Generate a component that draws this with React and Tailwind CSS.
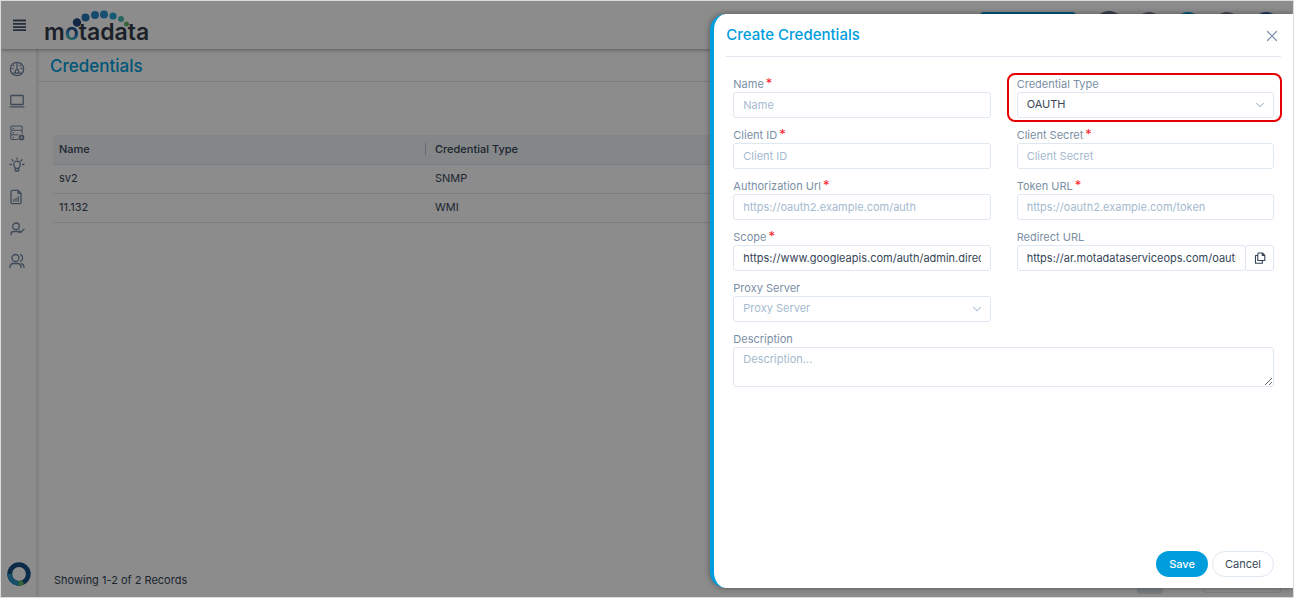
import React from 'react';
import { ChevronDown, X } from 'lucide-react';

const credentials = [
    { name: 'sv2', type: 'SNMP' },
    { name: '11.132', type: 'WMI' },
];

const controlClass =
    'block h-[26px] w-full rounded-[3px] border border-[#dfe7f0] bg-white px-[9px] pb-px text-[11px] outline-none placeholder:text-[#a5bacf]';

const Logo = () => (
    <svg width="108" height="44" viewBox="0 0 108 44" role="img" aria-label="motadata">
        <defs>
            <linearGradient id="ring" gradientUnits="userSpaceOnUse" x1="34" y1="23" x2="26" y2="38">
                <stop offset="0.35" stopColor="#20508c" />
                <stop offset="0.7" stopColor="#2a96d0" />
                <stop offset="0.95" stopColor="#4fb8a0" />
            </linearGradient>
        </defs>
        <circle cx="33" cy="19.5" r="4.2" fill="#264a80" />
        <circle cx="41.5" cy="14.5" r="4" fill="#2676b4" />
        <circle cx="51" cy="12" r="4" fill="#2785c8" />
        <circle cx="60" cy="11.5" r="4" fill="#2890cc" />
        <circle cx="69" cy="13" r="3.6" fill="#25a5cf" />
        <circle cx="77" cy="16" r="3" fill="#48b8b0" />
        <circle cx="82.5" cy="21" r="2.5" fill="#5cbb66" />
        <text x="0" y="37" fontSize="23" fontWeight="600" fill="#333d4b">
            m<tspan fill="url(#ring)">o</tspan>tadata
        </text>
    </svg>
);

const NavIcon = ({ children }) => (
    <svg width="16" height="16" viewBox="0 0 16 16" fill="none" stroke="currentColor" strokeWidth="1.3" strokeLinecap="round" strokeLinejoin="round">
        {children}
    </svg>
);

const navItems = [
    {
        label: 'Dashboard',
        icon: (
            <NavIcon>
                <circle cx="8" cy="8" r="6.7" />
                <path d="M8 2.5v6M3 7.5h1M12 7.5h1M4.5 4.3l.6.6M11.5 4.3l-.6.6M4 12.2h2.2M12 12.2H9.8" />
                <circle cx="8" cy="10.5" r="1.8" />
            </NavIcon>
        ),
    },
    {
        label: 'Devices',
        icon: (
            <NavIcon>
                <rect x="1.8" y="2.5" width="12.4" height="9" rx="0.6" />
                <path d="M1 13.8h14" />
            </NavIcon>
        ),
    },
    {
        label: 'Servers',
        icon: (
            <NavIcon>
                <path d="M3 1h9a1.2 1.2 0 0 1 1.2 1.2v1.9A1.2 1.2 0 0 1 12 5.3H3a1.2 1.2 0 0 1-1.2-1.2V2.2A1.2 1.2 0 0 1 3 1zM3 5.3h9a1.2 1.2 0 0 1 1.2 1.2V8M9 9.8H3a1.2 1.2 0 0 1-1.2-1.2V6.5A1.2 1.2 0 0 1 3 5.3M9 14.5H3a1.2 1.2 0 0 1-1.2-1.2V11A1.2 1.2 0 0 1 3 9.8M4 3.2h.6M4 7.6h.6M4 12.2h.6" strokeWidth="1.1" />
                <circle cx="12.5" cy="12.5" r="2" strokeWidth="1.8" />
            </NavIcon>
        ),
    },
    {
        label: 'Ideas',
        icon: (
            <NavIcon>
                <path d="M6.3 11.5c0-1.3-1.6-1.9-1.6-4a3.3 3.3 0 0 1 6.6 0c0 2.1-1.6 2.7-1.6 4zM6.5 14h3M8 1v1.2M1 7.5h1.5M13.5 7.5H15M3 2.8l1 1M13 2.8l-1 1M6.3 11.5v2M9.7 11.5v2" />
            </NavIcon>
        ),
    },
    {
        label: 'Reports',
        icon: (
            <NavIcon>
                <path d="M9 1.3H3.3A1.3 1.3 0 0 0 2 2.6v10.8a1.3 1.3 0 0 0 1.3 1.3h7.4a1.3 1.3 0 0 0 1.3-1.3V4.3zM9 1.3v3h3M4.8 12v-1.5M7 12V9.5M9.2 12V8" />
            </NavIcon>
        ),
    },
    {
        label: 'Requesters',
        icon: (
            <NavIcon>
                <circle cx="7" cy="5.3" r="3.3" />
                <path d="M2 13.8v-.8c0-1.5 1.2-2.5 2.7-2.5h3.5c1 0 1.8.4 2.3 1M10.5 10l1.3 1.3L15 8.3" />
            </NavIcon>
        ),
    },
    {
        label: 'Users',
        icon: (
            <NavIcon>
                <circle cx="6.5" cy="5" r="3.5" />
                <path d="M1 14.5c0-2.3 1.3-4 3.2-4h4.6c1.9 0 3.2 1.7 3.2 4M11.5 1.7a3.6 3.6 0 0 1 0 6.6M12.5 10.7c1.5.5 2.5 1.9 2.5 3.8" />
            </NavIcon>
        ),
    },
];

const Label = ({ id, required, children }) => (
    <label htmlFor={id} className="block h-4 text-[11px] leading-4 whitespace-nowrap text-[#7b8fa5]">
        {children}
        {required && <span className="ml-0.5 text-[13px] leading-none text-[#f5222d]">*</span>}
    </label>
);

const TextField = ({ id, label, required, placeholder, value }) => (
    <div>
        <Label id={id} required={required}>{label}</Label>
        <input id={id} type="text" placeholder={placeholder || label} defaultValue={value} className={`${controlClass} text-[#364658]`} />
    </div>
);

const SelectField = ({ id, label, option, muted, highlighted }) => (
    <div className="relative">
        <Label id={id}>{label}</Label>
        <div className="relative">
            <select id={id} className={`${controlClass} appearance-none ${muted ? 'text-[#a5bacf]' : 'text-[#364658]'}`}>
                <option>{option}</option>
            </select>
            <ChevronDown size={14} strokeWidth={1.8} className="pointer-events-none absolute top-1.5 right-[7px] text-[#a5bacf]" />
        </div>
        {highlighted && (
            <div className="pointer-events-none absolute -top-[3px] -right-2 -bottom-1 -left-[10px] rounded-lg border-2 border-[#e60000]" />
        )}
    </div>
);

const CredentialsPage = () => (
    <div className="flex min-h-0 flex-1 flex-col">
        <header className="z-10 flex h-12 shrink-0 items-center bg-white pr-[14px] pl-3 shadow-[0_1px_4px_rgba(0,0,0,0.35)]">
            <button type="button" aria-label="Menu" className="text-[#45546a]">
                <svg width="13" height="12" viewBox="0 0 13 12" stroke="currentColor" strokeWidth="1.8">
                    <path d="M0 1.5h13M0 4.8h13M0 8.1h13M0 11.1h13" />
                </svg>
            </button>
            <div className="ml-[18px]">
                <Logo />
            </div>
            <div className="ml-auto flex items-center gap-[13px]">
                <div className="mr-1.5 h-[26px] w-24 rounded-[4px] bg-[#009ddc]" />
                <div className="size-7 rounded-full bg-[#66758c]" />
                <div className="size-[26px] rounded-full bg-[#7b8699]" />
                <div className="size-[26px] rounded-full bg-[#009ddc]" />
                <div className="size-[26px] rounded-full bg-[#7b8699]" />
                <div className="size-[26px] rounded-full bg-[#356fb0]" />
            </div>
        </header>

        <div className="flex min-h-0 flex-1">
            <aside className="flex w-9 shrink-0 flex-col items-center border-r border-[#e6eaef] pt-3 pb-[11px] shadow-[1px_0_3px_rgba(0,0,0,0.12)]">
                <nav className="flex flex-col gap-4 pr-1 text-[#7388a3]">
                    {navItems.map(item => (
                        <a key={item.label} href="#" aria-label={item.label} className="block">
                            {item.icon}
                        </a>
                    ))}
                </nav>
                <svg width="24" height="24" viewBox="0 0 24 24" fill="none" strokeWidth="4.8" className="mt-auto">
                    <circle cx="12" cy="12" r="9.3" stroke="#164f86" />
                    <path d="M2.7 12A9.3 9.3 0 0 0 12 21.3" stroke="#2893c4" />
                    <path d="M11.5 21.3a9.3 9.3 0 0 0 4.5-1.1" stroke="#62b560" />
                </svg>
            </aside>

            <main className="flex min-w-0 flex-1 flex-col">
                <h1 className="flex h-[33px] shrink-0 items-center border-b border-[#dfe5ec] px-[13px] pt-1 text-[17px] font-medium text-[#009ddc]">
                    Credentials
                </h1>
                <div className="mt-[53px] pr-3 pl-4">
                    <table className="w-full table-fixed text-left text-[11px] text-[#364658]">
                        <thead>
                            <tr className="h-[29px] border-b border-[#dfe5ec] bg-[#f0f4f8]">
                                <th className="w-[373px] pl-1.5 font-medium">
                                    <span className="flex items-center justify-between">
                                        Name
                                        <span className="h-3 w-px bg-[#b5c5d6]" />
                                    </span>
                                </th>
                                <th className="pl-[9px] font-medium">Credential Type</th>
                            </tr>
                        </thead>
                        <tbody>
                            {credentials.map(row => (
                                <tr key={row.name} className="h-[29px] border-b border-[#dfe5ec]">
                                    <td className="pl-1.5">{row.name}</td>
                                    <td className="pl-[9px]">{row.type}</td>
                                </tr>
                            ))}
                        </tbody>
                    </table>
                </div>
                <footer className="mt-auto flex h-[34px] shrink-0 items-center pr-3 pl-[17px] text-[11px] text-[#364658]">
                    Showing 1-2 of 2 Records
                    <div className="ml-auto flex items-center gap-10">
                        <div className="h-7 w-[26px] rounded-[3px] bg-[#dde4ec]" />
                        <div className="h-[26px] w-[78px] rounded-[3px] border border-[#dfe7f0]" />
                    </div>
                </footer>
            </main>
        </div>
    </div>
);

const CreateCredentials = () => (
    <section
        role="dialog"
        aria-labelledby="drawer-title"
        className="absolute top-[13px] right-0 bottom-[9px] z-30 flex w-[45.1%] flex-col rounded-l-2xl border-l-4 border-[#009ddc] bg-white px-3 shadow-[0_0_6px_rgba(0,0,0,0.4)]"
    >
        <div className="flex h-[43px] shrink-0 items-center justify-between border-b border-[#e3e8f0]">
            <h2 id="drawer-title" className="text-[15px] font-medium text-[#009ddc]">Create Credentials</h2>
            <button type="button" aria-label="Close" className="pt-0.5 text-[#7b8fa5]">
                <X size={18} strokeWidth={1.6} />
            </button>
        </div>

        <form className="flex flex-1 flex-col px-[7px] pt-[19px] pb-[11px]" onSubmit={e => e.preventDefault()}>
            <div className="grid grid-cols-2 gap-x-[26px] gap-y-[9px]">
                <TextField id="name" label="Name" required />
                <SelectField id="type" label="Credential Type" option="OAUTH" highlighted />
                <TextField id="client-id" label="Client ID" required />
                <TextField id="client-secret" label="Client Secret" required />
                <TextField id="auth-url" label="Authorization Url" required placeholder="https://oauth2.example.com/auth" />
                <TextField id="token-url" label="Token URL" required placeholder="https://oauth2.example.com/token" />
                <TextField id="scope" label="Scope" required value="https://www.googleapis.com/auth/admin.directory.user" />
                <div>
                    <Label id="redirect">Redirect URL</Label>
                    <div className="flex">
                        <input id="redirect" type="text" readOnly defaultValue="https://ar.motadataserviceops.com/oauth/callback" className={`${controlClass} text-[#364658]`} />
                        <button type="button" aria-label="Copy" className="-ml-px flex h-[26px] w-[29px] shrink-0 items-center justify-center rounded-[3px] border border-[#dfe7f0] text-[#364658]">
                            <svg width="12" height="12" viewBox="0 0 12 12" fill="none" stroke="currentColor" strokeWidth="1.1" strokeLinejoin="round">
                                <path d="M4.5 1h4l2.3 2.3v5.2h-7V1.7zM8.3 1v2.5h2.5M3.8 3.5H1.5v7.7h6.8V8.5" />
                            </svg>
                        </button>
                    </div>
                </div>
                <SelectField id="proxy" label="Proxy Server" option="Proxy Server" muted />
                <div className="col-span-2">
                    <Label id="description">Description</Label>
                    <textarea
                        id="description"
                        placeholder="Description..."
                        className="block h-10 w-full rounded-[3px] border border-[#dfe7f0] px-[9px] py-[3px] text-[11px] leading-4 text-[#364658] outline-none placeholder:text-[#a5bacf]"
                    />
                </div>
            </div>

            <div className="mt-auto flex justify-end gap-1 text-[11px]">
                <button type="submit" className="h-[26px] rounded-full bg-[#009ddc] px-[13px] font-medium text-white">Save</button>
                <button type="button" className="h-[26px] rounded-full border border-[#dfe7f0] px-3 text-[#364658]">Cancel</button>
            </div>
        </form>
    </section>
);

const App = () => (
    <div className="relative flex h-screen flex-col overflow-hidden border border-[#d9dcdb] bg-white font-['Inter','Open_Sans',sans-serif]">
        <CredentialsPage />
        <div className="absolute inset-0 z-20 bg-black/45" />
        <CreateCredentials />
    </div>
);

export default App;
